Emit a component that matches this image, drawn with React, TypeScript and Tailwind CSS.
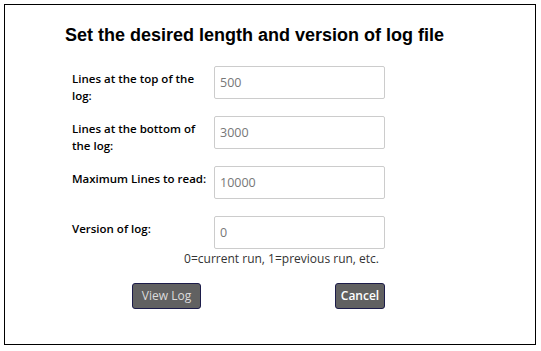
import React from 'react';

const rows = [
  { label: 'Lines at the top of the log:', value: '500' },
  { label: 'Lines at the bottom of the log:', value: '3000' },
  { label: 'Maximum Lines to read:', value: '10000' },
  { label: 'Version of log:', value: '0' },
];

export default function App() {
  return (
    <div className="w-[541px] h-[351px] bg-white pt-[4px] pl-[4px]">
      <div className="w-[532px] h-[341px] border border-black bg-white">
        <h1 className="pl-[60px] pt-[20px] text-[18px] leading-[21px] font-bold text-black font-['Liberation_Sans',Arial,sans-serif]">
          Set the desired length and version of log file
        </h1>

        <form className="pl-[67px] pt-[20px] font-['Open_Sans',sans-serif]">
          {rows.map((row, i) => (
            <div key={row.label} className={`flex items-start h-[33px] ${i < rows.length - 1 ? 'mb-[17px]' : ''}`}>
              <label className="w-[142px] shrink-0 pt-[4px] text-[11.5px] leading-[17px] font-semibold text-black">
                {row.label}
              </label>
              <input
                type="text"
                defaultValue={row.value}
                className="w-[171px] h-[33px] shrink-0 border border-[#cccccc] rounded-[2px] pl-[5px] text-[12.5px] text-[#777777] bg-white outline-none"
              />
            </div>
          ))}

          {/* hint under version */}
          <div className="w-[313px] flex justify-end pr-[6px] pt-[2px]">
            <p className="text-[12px] leading-[16px] text-[#333333]">0=current run, 1=previous run, etc.</p>
          </div>

          <div className="w-[313px] flex justify-between items-center mt-[16px] pl-[60px]">
            <button
              type="button"
              className="w-[69px] h-[26px] rounded-[3px] border border-[#1c1c4a] bg-[#616161] text-[12px] text-[#dcdcdc]"
            >
              View Log
            </button>
            <button
              type="button"
              className="w-[50px] h-[26px] rounded-[3px] border border-[#1c1c4a] bg-[#616161] text-[12px] font-semibold text-white"
            >
              Cancel
            </button>
          </div>
        </form>
      </div>
    </div>
  );
}
